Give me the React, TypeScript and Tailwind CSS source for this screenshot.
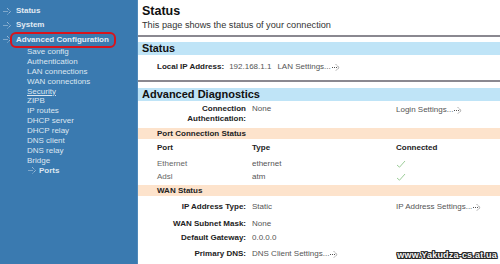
import React from "react";

const DotArrow = ({ color = "#555" }: { color?: string }) => (
  <svg width="9" height="8" viewBox="0 0 9 8" className="inline-block shrink-0">
    <path d="M0 4.5H5" stroke={color} strokeWidth="1" strokeDasharray="1 1" fill="none" />
    <path d="M4 1.5L7 4.5L4 7.5" stroke={color} strokeWidth="1" strokeDasharray="1 1" fill="none" />
  </svg>
);

const NavIcon = () => (
  <svg width="9" height="9" viewBox="0 0 9 9" className="shrink-0">
    <path d="M0.5 4.5H5" stroke="#c4d6e8" strokeWidth="1" strokeDasharray="1 1" fill="none" />
    <path d="M4 1L7.5 4.5L4 8" stroke="#c4d6e8" strokeWidth="1" strokeDasharray="1 1" fill="none" />
  </svg>
);

const Check = () => (
  <svg width="10" height="8" viewBox="0 0 10 8">
    <path d="M1 5L3.5 7.2L9 1" stroke="#9ccc98" strokeWidth="1" fill="none" />
  </svg>
);

const subItems = [
  "Save config",
  "Authentication",
  "LAN connections",
  "WAN connections",
  "Security",
  "ZIPB",
  "IP routes",
  "DHCP server",
  "DHCP relay",
  "DNS client",
  "DNS relay",
  "Bridge",
];

function Label({ children }: { children: React.ReactNode }) {
  return <div className="text-right pr-[2px] font-bold text-[8px] text-[#222]">{children}</div>;
}

export default function App() {
  return (
    <div className="relative flex w-[500px] h-[264px] overflow-hidden bg-white font-['Liberation_Sans',Arial,sans-serif]">
      {/* Sidebar */}
      <aside className="relative w-[138px] shrink-0 bg-[#3a7ab0] border-r border-[#4f89ba] pt-[4px]">
        {["Status", "System", "Advanced Configuration"].map((t, i) => (
          <div
            key={t}
            className={`flex items-center gap-[4px] pl-[3px] ${i === 2 ? "h-[15px]" : "h-[14px]"}`}
          >
            <NavIcon />
            <span className="font-bold text-[8px] text-[#e2eaf3] leading-none">{t}</span>
          </div>
        ))}
        <div className="pl-[27px]">
          {subItems.map((t) => (
            <div key={t} className="h-[9.9px] flex items-center">
              <span
                className={`text-[8px] leading-none text-[#dde6f0] ${t === "Security" ? "underline" : ""}`}
              >
                {t}
              </span>
            </div>
          ))}
          <div className="h-[9.9px] flex items-center gap-[2px] pl-[1px]">
            <NavIcon />
            <span className="text-[8px] font-bold leading-none text-[#dde6f0]">Ports</span>
          </div>
        </div>
        {/* red annotation */}
        <div className="absolute left-[10px] top-[32px] w-[106px] h-[16px] border-2 border-[#d8141c] rounded-[6px]" />
      </aside>

      {/* Main */}
      <main className="flex-1 flex flex-col">
        <div className="pl-[4px] pt-[4px]">
          <div className="h-[14px] leading-[14px] font-bold text-[12.5px] text-[#111]">Status</div>
          <div className="mt-[2px] h-[10px] leading-[10px] text-[9.2px] text-[#333]">
            This page shows the status of your connection
          </div>
        </div>
        <div className="mt-[5px] h-[2px] bg-[#8a8890]" />

        <div className="mt-[5px] h-[13px] bg-[#bfe4f7] pl-[4px] flex items-center font-bold text-[10.8px] text-[#111]">
          Status
        </div>
        <div className="h-[24px] flex items-center pl-[19px] text-[8px]">
          <span className="font-bold text-[#222]">Local IP Address:</span>
          <span className="ml-[5px] text-[#555]">192.168.1.1</span>
          <span className="ml-[6px] text-[#555]">LAN Settings...</span>
          <span className="ml-[1px]"><DotArrow /></span>
        </div>
        <div className="mt-[1px] h-[2px] bg-[#8a8890]" />

        <div className="mt-[6px] h-[13px] bg-[#bfe4f7] pl-[4px] flex items-center font-bold text-[11px] text-[#111]">
          Advanced Diagnostics
        </div>
        <div className="grid grid-cols-[110px_140px_1fr] gap-x-[4px] pt-[3px] text-[8px] leading-[10px]">
          <Label>
            Connection
            <br />
            Authentication:
          </Label>
          <div className="text-[#555]">None</div>
          <div className="text-[#555] flex items-center gap-[1px] h-[10px] mt-[1px]">
            Login Settings... <DotArrow />
          </div>
        </div>

        <div className="mt-[4px] h-[11px] bg-[#fde3cc] pl-[19px] flex items-center font-bold text-[8px] text-[#222]">
          Port Connection Status
        </div>
        <div className="grid grid-cols-[110px_140px_1fr] gap-x-[4px] text-[8px]">
          <div className="h-[18px] flex items-center pl-[19px] font-bold text-[#222]">Port</div>
          <div className="h-[18px] flex items-center font-bold text-[#222]">Type</div>
          <div className="h-[18px] flex items-center font-bold text-[#222]">Connected</div>

          <div className="h-[13px] flex items-center pl-[19px] text-[#666]">Ethernet</div>
          <div className="h-[13px] flex items-center text-[#555]">ethernet</div>
          <div className="h-[13px] flex items-center"><Check /></div>

          <div className="h-[14px] flex items-center pl-[19px] text-[#666]">Adsl</div>
          <div className="h-[14px] flex items-center text-[#555]">atm</div>
          <div className="h-[14px] flex items-center"><Check /></div>
        </div>

        <div className="mt-[1px] h-[11px] bg-[#fde3cc] pl-[19px] flex items-center font-bold text-[8px] text-[#222]">
          WAN Status
        </div>
        <div className="grid grid-cols-[110px_140px_1fr] gap-x-[4px] text-[8px]">
          <div className="h-[22px] flex items-center justify-end"><Label>IP Address Type:</Label></div>
          <div className="h-[22px] flex items-center text-[#555]">Static</div>
          <div className="h-[22px] flex items-center gap-[1px] text-[#555]">
            IP Address Settings... <DotArrow />
          </div>

          <div className="h-[12px] flex items-center justify-end"><Label>WAN Subnet Mask:</Label></div>
          <div className="h-[12px] flex items-center text-[#555]">None</div>
          <div className="h-[12px]" />

          <div className="h-[16px] flex items-center justify-end"><Label>Default Gateway:</Label></div>
          <div className="h-[16px] flex items-center text-[#555]">0.0.0.0</div>
          <div className="h-[16px]" />

          <div className="h-[16px] flex items-center justify-end"><Label>Primary DNS:</Label></div>
          <div className="h-[16px] flex items-center gap-[1px] text-[#555] whitespace-nowrap">
            DNS Client Settings... <DotArrow />
          </div>
          <div className="h-[16px]" />
        </div>
      </main>

      {/* watermark */}
      <div className="absolute right-[3px] bottom-[4px] font-bold text-[9px] leading-none text-[#f4f4f4] tracking-[0.2px] [text-shadow:1px_0_0_#222,-1px_0_0_#222,0_1px_0_#222,0_-1px_0_#222,1px_1px_0_#222,-1px_-1px_0_#222,1px_-1px_0_#222,-1px_1px_0_#222]">
        www.Yakudza-cs.at.ua
      </div>
    </div>
  );
}
